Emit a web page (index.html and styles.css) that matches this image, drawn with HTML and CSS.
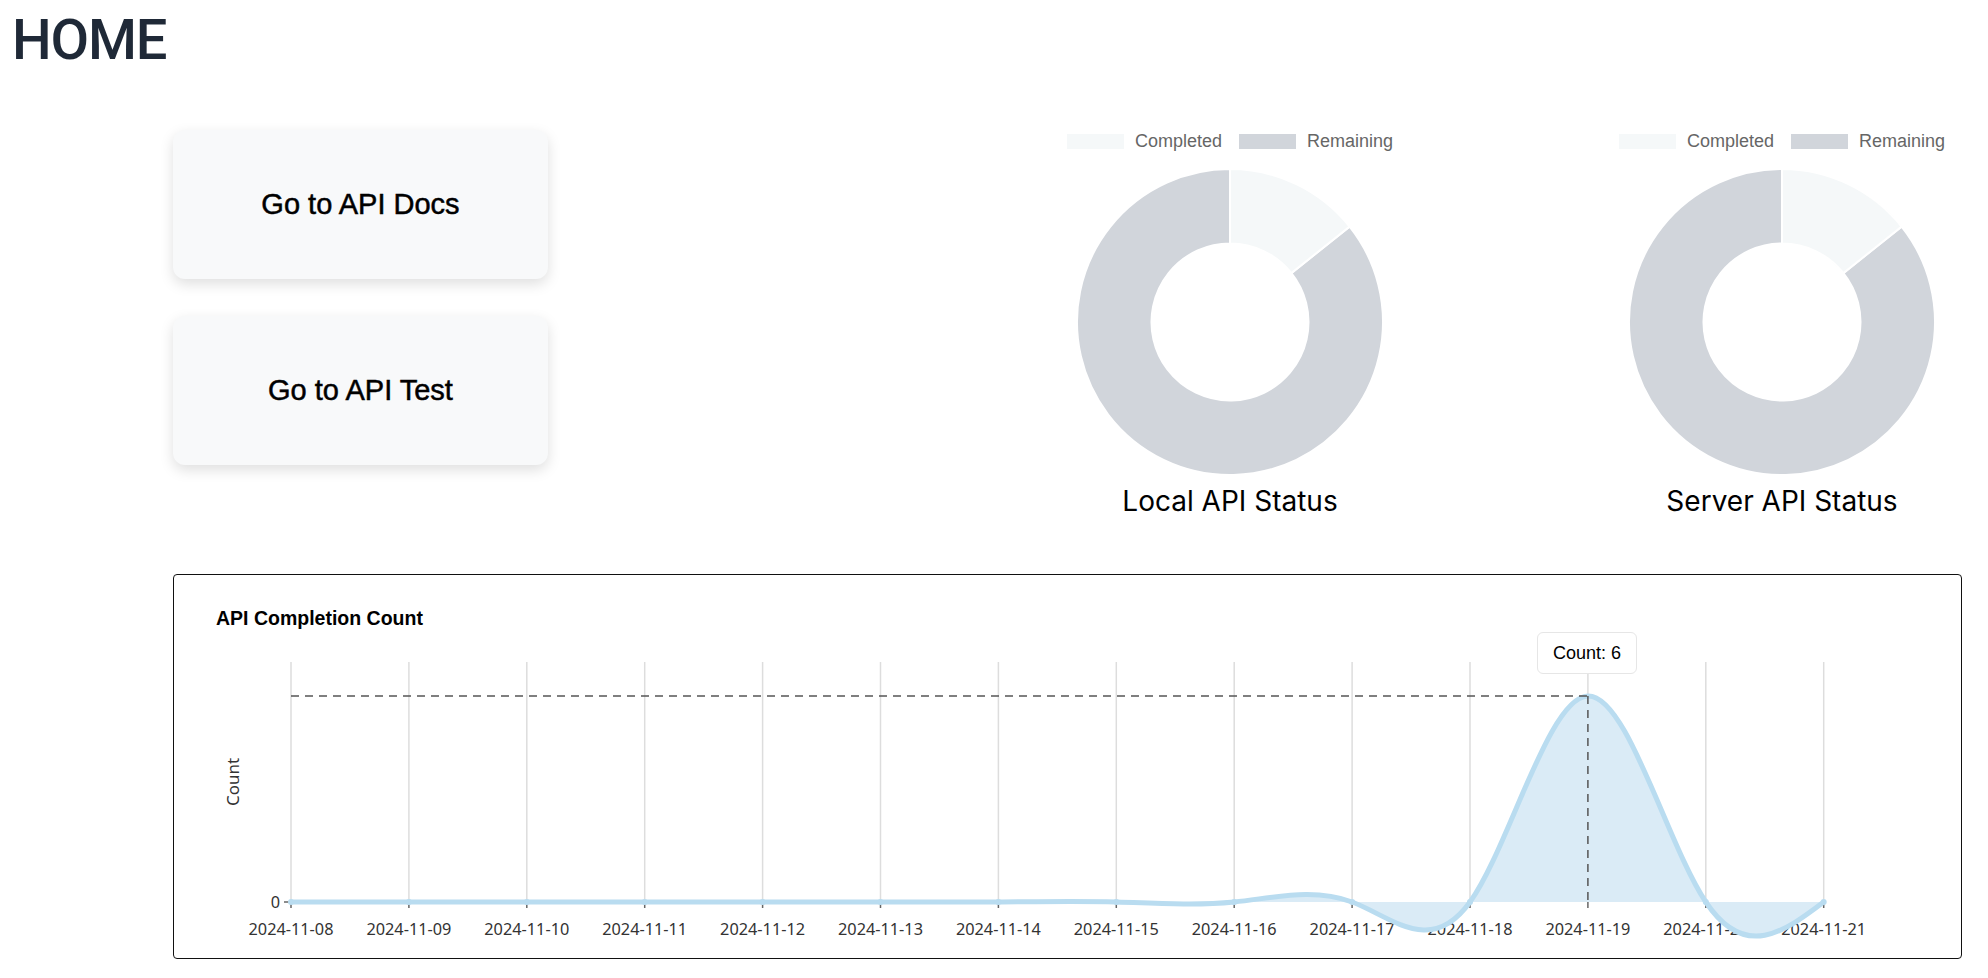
FILE: index.html
```html
<!DOCTYPE html>
<html lang="en">
<head>
<meta charset="utf-8">
<title>HOME</title>
<link rel="stylesheet" href="styles.css">
</head>
<body>
<div class="page">
  <h1 class="page-title">HOME</h1>
  <main class="content">
    <section class="top-row">
      <div class="nav-buttons">
        <button class="nav-btn">Go to API Docs</button>
        <button class="nav-btn">Go to API Test</button>
      </div>
      <div class="status-charts">
        <figure class="donut-card">
          <div class="legend">
            <span class="legend-item"><span class="swatch swatch-done"></span>Completed</span>
            <span class="legend-item"><span class="swatch swatch-rem"></span>Remaining</span>
          </div>
          <svg class="donut" viewBox="0 0 306 306" width="306" height="306">
            <path class="slice-rem" d="M272.6,57.6 A153,153 0 1 1 153,0 L153,74.5 A78.5,78.5 0 1 0 214.4,104.1 Z"/>
            <path class="slice-done" d="M153,0 A153,153 0 0 1 272.6,57.6 L214.4,104.1 A78.5,78.5 0 0 0 153,74.5 Z"/>
          </svg>
          <figcaption class="donut-title">Local API Status</figcaption>
        </figure>
        <figure class="donut-card">
          <div class="legend">
            <span class="legend-item"><span class="swatch swatch-done"></span>Completed</span>
            <span class="legend-item"><span class="swatch swatch-rem"></span>Remaining</span>
          </div>
          <svg class="donut" viewBox="0 0 306 306" width="306" height="306">
            <path class="slice-rem" d="M272.6,57.6 A153,153 0 1 1 153,0 L153,74.5 A78.5,78.5 0 1 0 214.4,104.1 Z"/>
            <path class="slice-done" d="M153,0 A153,153 0 0 1 272.6,57.6 L214.4,104.1 A78.5,78.5 0 0 0 153,74.5 Z"/>
          </svg>
          <figcaption class="donut-title">Server API Status</figcaption>
        </figure>
      </div>
    </section>

    <section class="line-card">
      <h2 class="line-title">API Completion Count</h2>
      <div class="plot">
        <svg class="plot-svg" width="1787" height="328" viewBox="0 0 1787 328">
          <g class="grid">
            <line x1="117" y1="32" x2="117" y2="272"/>
            <line x1="234.9" y1="32" x2="234.9" y2="272"/>
            <line x1="352.8" y1="32" x2="352.8" y2="272"/>
            <line x1="470.7" y1="32" x2="470.7" y2="272"/>
            <line x1="588.6" y1="32" x2="588.6" y2="272"/>
            <line x1="706.5" y1="32" x2="706.5" y2="272"/>
            <line x1="824.4" y1="32" x2="824.4" y2="272"/>
            <line x1="942.3" y1="32" x2="942.3" y2="272"/>
            <line x1="1060.2" y1="32" x2="1060.2" y2="272"/>
            <line x1="1178.1" y1="32" x2="1178.1" y2="272"/>
            <line x1="1296" y1="32" x2="1296" y2="272"/>
            <line x1="1413.9" y1="32" x2="1413.9" y2="272"/>
            <line x1="1531.8" y1="32" x2="1531.8" y2="272"/>
            <line x1="1649.7" y1="32" x2="1649.7" y2="272"/>
          </g>
          <g class="ticks">
            <line x1="110" y1="272" x2="117" y2="272"/>
            <line x1="117" y1="272" x2="117" y2="278"/>
            <line x1="234.9" y1="272" x2="234.9" y2="278"/>
            <line x1="352.8" y1="272" x2="352.8" y2="278"/>
            <line x1="470.7" y1="272" x2="470.7" y2="278"/>
            <line x1="588.6" y1="272" x2="588.6" y2="278"/>
            <line x1="706.5" y1="272" x2="706.5" y2="278"/>
            <line x1="824.4" y1="272" x2="824.4" y2="278"/>
            <line x1="942.3" y1="272" x2="942.3" y2="278"/>
            <line x1="1060.2" y1="272" x2="1060.2" y2="278"/>
            <line x1="1178.1" y1="272" x2="1178.1" y2="278"/>
            <line x1="1296" y1="272" x2="1296" y2="278"/>
            <line x1="1413.9" y1="272" x2="1413.9" y2="278"/>
            <line x1="1531.8" y1="272" x2="1531.8" y2="278"/>
            <line x1="1649.7" y1="272" x2="1649.7" y2="278"/>
          </g>
          <g class="tick-labels">
            <text x="106" y="278" class="y-tick">0</text>
            <text x="117" y="305">2024-11-08</text>
            <text x="234.9" y="305">2024-11-09</text>
            <text x="352.8" y="305">2024-11-10</text>
            <text x="470.7" y="305">2024-11-11</text>
            <text x="588.6" y="305">2024-11-12</text>
            <text x="706.5" y="305">2024-11-13</text>
            <text x="824.4" y="305">2024-11-14</text>
            <text x="942.3" y="305">2024-11-15</text>
            <text x="1060.2" y="305">2024-11-16</text>
            <text x="1178.1" y="305">2024-11-17</text>
            <text x="1296" y="305">2024-11-18</text>
            <text x="1413.9" y="305">2024-11-19</text>
            <text x="1531.8" y="305">2024-11-20</text>
            <text x="1649.7" y="305">2024-11-21</text>
          </g>
          <text class="axis-title" transform="translate(65,152) rotate(-90)">Count</text>
          <path class="area" d="M117,272 L824.4,272 C863.7,271.72 903,270.94 942.3,272 C981.6,273.06 1020.9,275.94 1060.2,272 C1099.5,268.06 1138.8,257.29 1178.1,272 C1217.4,286.71 1256.7,326.91 1296,272 C1335.3,217.09 1374.6,67.08 1413.9,66 C1453.2,64.96 1492.5,212.85 1531.8,272 C1571.1,331.15 1610.4,301.58 1649.7,272 Z"/>
          <path class="curve" d="M117,272 L824.4,272 C863.7,271.72 903,270.94 942.3,272 C981.6,273.06 1020.9,275.94 1060.2,272 C1099.5,268.06 1138.8,257.29 1178.1,272 C1217.4,286.71 1256.7,326.91 1296,272 C1335.3,217.09 1374.6,67.08 1413.9,66 C1453.2,64.96 1492.5,212.85 1531.8,272 C1571.1,331.15 1610.4,301.58 1649.7,272"/>
          <g class="dots">
            <circle cx="117" cy="272" r="3"/>
            <circle cx="234.9" cy="272" r="3"/>
            <circle cx="352.8" cy="272" r="3"/>
            <circle cx="470.7" cy="272" r="3"/>
            <circle cx="588.6" cy="272" r="3"/>
            <circle cx="706.5" cy="272" r="3"/>
            <circle cx="824.4" cy="272" r="3"/>
            <circle cx="942.3" cy="272" r="3"/>
            <circle cx="1060.2" cy="272" r="3"/>
            <circle cx="1178.1" cy="272" r="3"/>
            <circle cx="1296" cy="272" r="3"/>
            <circle cx="1531.8" cy="272" r="3"/>
            <circle cx="1649.7" cy="272" r="3"/>
          </g>
          <g class="crosshair">
            <line x1="117" y1="66" x2="1413.9" y2="66"/>
            <line x1="1413.9" y1="66" x2="1413.9" y2="272"/>
          </g>
        </svg>
        <div class="tooltip">Count: 6</div>
      </div>
    </section>
  </main>
</div>
</body>
</html>
```

FILE: styles.css
```css
* {
  box-sizing: border-box;
}

body {
  margin: 0;
  background: #ffffff;
  font-family: "Liberation Sans", Arial, sans-serif;
}

.page {
  padding: 7px 0 0 12px;
}

.page-title {
  margin: 0;
  font-family: Roboto, "Liberation Sans", sans-serif;
  font-weight: 500;
  font-size: 56px;
  line-height: 67px;
  letter-spacing: -1.2px;
  color: #1f2937;
}

.content {
  margin: 56px 0 0 161px;
  width: 1789px;
  display: flex;
  flex-direction: column;
  gap: 56px;
}

.top-row {
  display: flex;
  justify-content: space-between;
  align-items: flex-start;
}

.nav-buttons {
  width: 375px;
  display: flex;
  flex-direction: column;
  gap: 37px;
}

.nav-btn {
  height: 149px;
  border: none;
  border-radius: 12px;
  background: #f8f9fa;
  box-shadow: 0 5px 14px rgba(0, 0, 0, 0.13);
  font-family: "Liberation Sans", Arial, sans-serif;
  font-size: 29px;
  color: #000000;
  -webkit-text-stroke: 0.5px #000000;
  cursor: pointer;
}

.status-charts {
  display: flex;
  gap: 192px;
}

.donut-card {
  margin: 0;
  width: 360px;
  display: flex;
  flex-direction: column;
  align-items: center;
}

.legend {
  margin-top: 4px;
  height: 15px;
  display: flex;
  align-items: center;
  gap: 17px;
  font-family: "Liberation Sans", Arial, sans-serif;
  font-size: 18px;
  line-height: 15px;
  color: #666666;
}

.legend-item {
  display: flex;
  align-items: center;
  gap: 11px;
}

.swatch {
  width: 57px;
  height: 15px;
}

.swatch-done {
  background: #f5f8f9;
}

.swatch-rem {
  background: #d1d5db;
}

.donut {
  display: block;
  margin-top: 20px;
}

.slice-done {
  fill: #f5f8f9;
  stroke: #ffffff;
  stroke-width: 2;
}

.slice-rem {
  fill: #d1d5db;
  stroke: #ffffff;
  stroke-width: 2;
}

.donut-title {
  margin-top: 9px;
  font-family: Inter, "Liberation Sans", sans-serif;
  font-size: 28px;
  line-height: 34px;
  color: #000000;
}

.line-card {
  position: relative;
  height: 385px;
  border: 1px solid #111111;
  border-radius: 4px;
  padding-top: 31px;
}

.line-title {
  margin: 0 0 0 42px;
  font-family: "Liberation Sans", Arial, sans-serif;
  font-weight: 700;
  font-size: 19.5px;
  line-height: 24px;
  color: #000000;
}

.plot {
  position: relative;
  height: 328px;
}

.plot-svg {
  display: block;
}

.grid line {
  stroke: #dddddd;
  stroke-width: 1.5;
}

.ticks line {
  stroke: #666666;
  stroke-width: 1.5;
}

.tick-labels text {
  font-family: "Noto Sans", "Open Sans", sans-serif;
  font-size: 16.3px;
  fill: #333333;
  text-anchor: middle;
}

.tick-labels .y-tick {
  text-anchor: end;
}

.axis-title {
  font-family: "Noto Sans", "Open Sans", sans-serif;
  font-size: 17px;
  fill: #333333;
  text-anchor: middle;
}

.area {
  fill: #daebf6;
}

.curve {
  fill: none;
  stroke: #b9dcf0;
  stroke-width: 5;
  stroke-linejoin: round;
}

.dots circle {
  fill: #b9dcf0;
}

.crosshair line {
  stroke: #555555;
  stroke-width: 1.5;
  stroke-dasharray: 8 6;
}

.tooltip {
  position: absolute;
  left: 1363px;
  top: 2px;
  width: 100px;
  height: 42px;
  display: flex;
  align-items: center;
  justify-content: center;
  background: #ffffff;
  border: 1px solid #e6e6e6;
  border-radius: 6px;
  font-family: "Liberation Sans", Arial, sans-serif;
  font-size: 18px;
  color: #000000;
}
```
